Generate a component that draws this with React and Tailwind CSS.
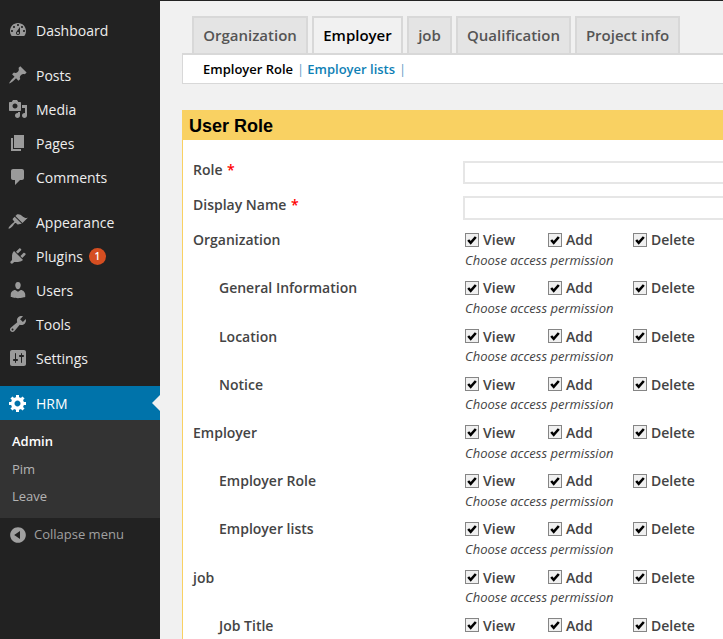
const ICONS = {
  dashboard: "M3.76 16h12.48c1.1-1.37 1.76-3.11 1.76-5 0-4.42-3.58-8-8-8s-8 3.58-8 8c0 1.89.66 3.63 1.76 5zM10 4c.55 0 1 .45 1 1s-.45 1-1 1-1-.45-1-1 .45-1 1-1zM6 6c.55 0 1 .45 1 1s-.45 1-1 1-1-.45-1-1 .45-1 1-1zm8 0c.55 0 1 .45 1 1s-.45 1-1 1-1-.45-1-1 .45-1 1-1zm-5.37 5.55L12 7v6c0 1.1-.9 2-2 2s-2-.9-2-2c0-.57.24-1.08.63-1.45zM4 10c.55 0 1 .45 1 1s-.45 1-1 1-1-.45-1-1 .45-1 1-1zm12 0c.55 0 1 .45 1 1s-.45 1-1 1-1-.45-1-1 .45-1 1-1zm-5 3c0-.55-.45-1-1-1s-1 .45-1 1 .45 1 1 1 1-.45 1-1z",
  post: "M10.44 3.02l1.82-1.82 6.36 6.35-1.83 1.82c-1.05-.68-2.48-.57-3.41.36l-.75.75c-.92.93-1.04 2.35-.35 3.41l-1.83 1.82-2.41-2.41-2.8 2.79c-.42.42-3.38 2.71-3.8 2.29s1.86-3.39 2.28-3.81l2.79-2.79L4.1 9.36l1.83-1.82c1.05.69 2.48.57 3.4-.36l.75-.75c.93-.92 1.05-2.35.36-3.41z",
  media: "M13 11V4c0-.55-.45-1-1-1h-1.67L9 1H5L3.67 3H2c-.55 0-1 .45-1 1v7c0 .55.45 1 1 1h10c.55 0 1-.45 1-1zM7 4.5c1.38 0 2.5 1.12 2.5 2.5S8.38 9.5 7 9.5 4.5 8.38 4.5 7 5.62 4.5 7 4.5zM14 6h5v10.5c0 1.38-1.12 2.5-2.5 2.5S14 17.88 14 16.5s1.12-2.5 2.5-2.5c.17 0 .34.02.5.05V9h-3V6zm-4 8.05V13h2v3.5c0 1.38-1.12 2.5-2.5 2.5S7 17.88 7 16.5 8.12 14 9.5 14c.17 0 .34.02.5.05z",
  page: "M6 15V2h10v13H6zm-1 1h8v2H3V5h2v11z",
  comments: "M5 2h9c1.1 0 2 .9 2 2v7c0 1.1-.9 2-2 2h-2l-5 5v-5H5c-1.1 0-2-.9-2-2V4c0-1.1.9-2 2-2z",
  appearance: "M14.48 11.06L7.41 3.99l1.5-1.5c.5-.56 2.3-.47 3.51.32 1.21.8 1.43 1.28 2.91 2.1 1.18.64 2.45 1.26 4.45.85zm-.71.71L6.7 4.7 4.93 6.47c-.39.39-.39 1.02 0 1.41l1.06 1.06c.39.39.39 1.03 0 1.42-.6.6-1.43 1.11-2.21 1.69-.35.26-.7.53-1.01.84-1.13 1.13-2.7 3.2-2.2 3.7s2.57-1.07 3.7-2.2c.31-.31.58-.66.84-1.01.58-.78 1.09-1.61 1.69-2.21.39-.39 1.03-.39 1.42 0l1.06 1.06c.39.39 1.02.39 1.41 0z",
  plugins: "M13.11 4.36L9.87 7.6 8 5.73l3.24-3.24c.35-.34 1.05-.2 1.56.32.52.51.66 1.21.31 1.55zm-8 1.77l.91-1.12 9.01 9.01-1.19.84c-.71.71-2.63 1.16-3.82 1.16H6.14L4.9 17.26c-.59.59-1.54.59-2.12 0-.59-.58-.59-1.53 0-2.12l1.24-1.24v-3.88c0-1.13.4-3.19 1.09-3.89zm7.26 3.97l3.24-3.24c.34-.35 1.04-.21 1.55.31.52.51.66 1.21.31 1.55l-3.24 3.25z",
  users: "M10 9.25c-2.27 0-2.73-3.44-2.73-3.44C7 4.02 7.82 2 9.97 2c2.16 0 2.98 2.02 2.71 3.81 0 0-.41 3.44-2.68 3.44zm0 2.57L12.72 10c2.39 0 4.52 2.33 4.52 4.53v2.49s-3.65 1.13-7.24 1.13c-3.65 0-7.24-1.13-7.24-1.13v-2.49c0-2.25 1.94-4.48 4.47-4.48z",
  tools: "M16.68 9.77c-1.34 1.34-3.3 1.67-4.95.99l-5.41 6.52c-.99.99-2.59.99-3.58 0s-.99-2.59 0-3.57l6.52-5.42c-.68-1.65-.35-3.61.99-4.95 1.28-1.28 3.12-1.62 4.72-1.06l-2.89 2.89 2.82 2.82 2.86-2.87c.53 1.58.18 3.39-1.08 4.65zM3.81 16.21c.4.39 1.04.39 1.43 0 .4-.4.4-1.04 0-1.43-.39-.4-1.03-.4-1.43 0-.39.39-.39 1.03 0 1.43z",
  settings: "M18 16V4c0-1.1-.9-2-2-2H4c-1.1 0-2 .9-2 2v12c0 1.1.9 2 2 2h12c1.1 0 2-.9 2-2zM8 11h1c.55 0 1 .45 1 1s-.45 1-1 1H8v1.5c0 .28-.22.5-.5.5s-.5-.22-.5-.5V13H6c-.55 0-1-.45-1-1s.45-1 1-1h1V5.5c0-.28.22-.5.5-.5s.5.22.5.5V11zm5-2h-1c-.55 0-1-.45-1-1s.45-1 1-1h1V5.5c0-.28.22-.5.5-.5s.5.22.5.5V7h1c.55 0 1 .45 1 1s-.45 1-1 1h-1v5.5c0 .28-.22.5-.5.5s-.5-.22-.5-.5V9z",
  gear: "M18 12h-2.18c-.17.7-.44 1.35-.81 1.93l1.54 1.54-2.1 2.1-1.54-1.54c-.58.36-1.23.63-1.91.79V19H8v-2.18c-.68-.16-1.33-.43-1.91-.79l-1.54 1.54-2.12-2.12 1.54-1.54c-.36-.58-.63-1.23-.79-1.91H1V9.03h2.17c.16-.7.44-1.35.8-1.94L2.43 5.55l2.1-2.1 1.54 1.54c.58-.37 1.24-.64 1.93-.81V2h3v2.18c.68.16 1.33.43 1.91.79l1.54-1.54 2.12 2.12-1.54 1.54c.36.59.64 1.24.8 1.94H18V12zm-8.5 1.5c1.66 0 3-1.34 3-3s-1.34-3-3-3-3 1.34-3 3 1.34 3 3 3z",
  collapse: "M10 2.16c4.33 0 7.84 3.51 7.84 7.84s-3.51 7.84-7.84 7.84S2.16 14.33 2.16 10 5.71 2.16 10 2.16zm2 11.72V6.12L6.18 9.97z",
};

function Icon({ name, className }) {
  return (
    <svg viewBox="0 0 20 20" width="20" height="20" fill="currentColor" className={className}>
      <path d={ICONS[name]} />
    </svg>
  );
}

function NavItem({ icon, label, badge }) {
  return (
    <div className="flex h-[34px] items-center pl-2 text-[14px] text-[#eeeeee]">
      <Icon name={icon} className="shrink-0 text-[#9a9a9a]" />
      <span className="ml-2">{label}</span>
      {badge && (
        <span className="ml-[6px] flex h-[17px] w-[17px] items-center justify-center rounded-full bg-[#d54e21] text-[10px] font-semibold text-white">
          {badge}
        </span>
      )}
    </div>
  );
}

function Sidebar() {
  return (
    <aside className="flex w-[160px] shrink-0 flex-col bg-[#222222] pt-[13px]">
      <NavItem icon="dashboard" label="Dashboard" />
      <div className="mt-[11px]">
        <NavItem icon="post" label="Posts" />
        <NavItem icon="media" label="Media" />
        <NavItem icon="page" label="Pages" />
        <NavItem icon="comments" label="Comments" />
      </div>
      <div className="mt-[11px]">
        <NavItem icon="appearance" label="Appearance" />
        <NavItem icon="plugins" label="Plugins" badge="1" />
        <NavItem icon="users" label="Users" />
        <NavItem icon="tools" label="Tools" />
        <NavItem icon="settings" label="Settings" />
      </div>
      <div className="relative mt-[11px] flex h-[34px] items-center bg-[#0073aa] pl-2 text-[14px] text-white">
        <Icon name="gear" className="shrink-0 text-white" />
        <span className="ml-2">HRM</span>
        <span className="absolute right-0 top-[9px] h-0 w-0 border-y-[8px] border-r-[8px] border-y-transparent border-r-[#f1f1f1]" />
      </div>
      <div className="flex h-[98px] flex-col bg-[#333333] pl-3 pt-[8px] text-[13px] leading-[27.5px] text-[#b4b4b4]">
        <div className="font-semibold text-white">Admin</div>
        <div>Pim</div>
        <div>Leave</div>
      </div>
      <div className="flex h-[34px] items-center pl-2 text-[13px] text-[#a0a0a0]">
        <Icon name="collapse" className="shrink-0 text-[#a0a0a0]" />
        <span className="ml-[6px]">Collapse menu</span>
      </div>
    </aside>
  );
}

function Tab({ label, active, width }) {
  return (
    <div
      className={
        "flex h-[37px] items-center justify-center border-2 border-b-0 border-[#d8d8d8] pb-[1px] text-[15px] font-semibold " +
        width +
        (active ? " bg-[#f1f1f1] text-black" : " bg-[#e4e4e4] text-[#555555]")
      }
    >
      {label}
    </div>
  );
}

function Check({ label, width }) {
  return (
    <div className={"flex items-center " + width}>
      <span className="flex h-[14px] w-[14px] shrink-0 items-center justify-center border border-[#858585] bg-[#f0f0f0]">
        <svg viewBox="0 0 12 12" width="12" height="12">
          <path d="M2.2 6 4.7 8.8 9.8 3" fill="none" stroke="#000000" strokeWidth="2.6" />
        </svg>
      </span>
      <span className="ml-[4px] text-[14px] font-semibold text-[#444444]">{label}</span>
    </div>
  );
}

function PermRow({ label, sub }) {
  return (
    <div className="grid h-[48.22px] grid-cols-[270px_1fr]">
      <div className={"text-[14px] font-semibold leading-[19px] text-[#444444] " + (sub ? "pl-[26px]" : "")}>
        {label}
      </div>
      <div className="pl-[2px]">
        <div className="flex h-[19px] items-center">
          <Check label="View" width="w-[83px]" />
          <Check label="Add" width="w-[85px]" />
          <Check label="Delete" width="w-[90px]" />
        </div>
        <div className="mt-[1.7px] text-[13px] italic leading-[18px] text-[#444444]">Choose access permission</div>
      </div>
    </div>
  );
}

function TextRow({ label, h, gap }) {
  return (
    <div className={"grid grid-cols-[270px_1fr] " + gap}>
      <div className="text-[14px] font-semibold leading-[17px] text-[#444444]">
        {label} <span className="ml-[1px] text-[#ff0000]">*</span>
      </div>
      <div className={"border-2 border-[#e6e6e6] bg-white " + h} />
    </div>
  );
}

const ROWS = [
  ["Organization", false],
  ["General Information", true],
  ["Location", true],
  ["Notice", true],
  ["Employer", false],
  ["Employer Role", true],
  ["Employer lists", true],
  ["job", false],
  ["Job Title", true],
];

export default function App() {
  return (
    <div className="flex h-[639px] w-[723px] overflow-hidden bg-[#f1f1f1] font-['Open_Sans',sans-serif]">
      <Sidebar />
      <main className="min-w-0 flex-1 overflow-hidden border-t border-[#222222] pl-[22px] pt-[15px]">
        <div className="w-[640px]">
          <div className="flex gap-[4px] pl-[10px]">
            <Tab label="Organization" width="w-[116px]" />
            <Tab label="Employer" width="w-[91px]" active />
            <Tab label="job" width="w-[45px]" />
            <Tab label="Qualification" width="w-[115px]" />
            <Tab label="Project info" width="w-[105px]" />
          </div>
          <div className="flex h-[31px] items-center border-x border-t-2 border-b border-[#d8d8d8] bg-white pl-[20px] pt-[1px] text-[13px] font-semibold">
            <span className="text-black">Employer Role</span>
            <span className="ml-[4px] mr-[3px] font-normal text-[#5e9cc5]">|</span>
            <span className="text-[#0e7fb5]">Employer lists</span>
            <span className="ml-[4px] font-normal text-[#5e9cc5]">|</span>
          </div>
          <div className="mt-[26px] border-l border-[#f9d162] bg-white">
            <div className="flex h-[30px] items-center bg-[#f9d162] pl-[6px] pt-[2px] font-['Liberation_Sans',sans-serif] text-[18px] font-bold text-black">
              User Role
            </div>
            <div className="pl-[10px] pt-[21px]">
              <TextRow label="Role" h="h-[23px]" gap="mb-[12px]" />
              <TextRow label="Display Name" h="h-[24px]" gap="mb-[10.1px]" />
              {ROWS.map(([label, sub]) => (
                <PermRow key={label} label={label} sub={sub} />
              ))}
            </div>
          </div>
        </div>
      </main>
    </div>
  );
}
